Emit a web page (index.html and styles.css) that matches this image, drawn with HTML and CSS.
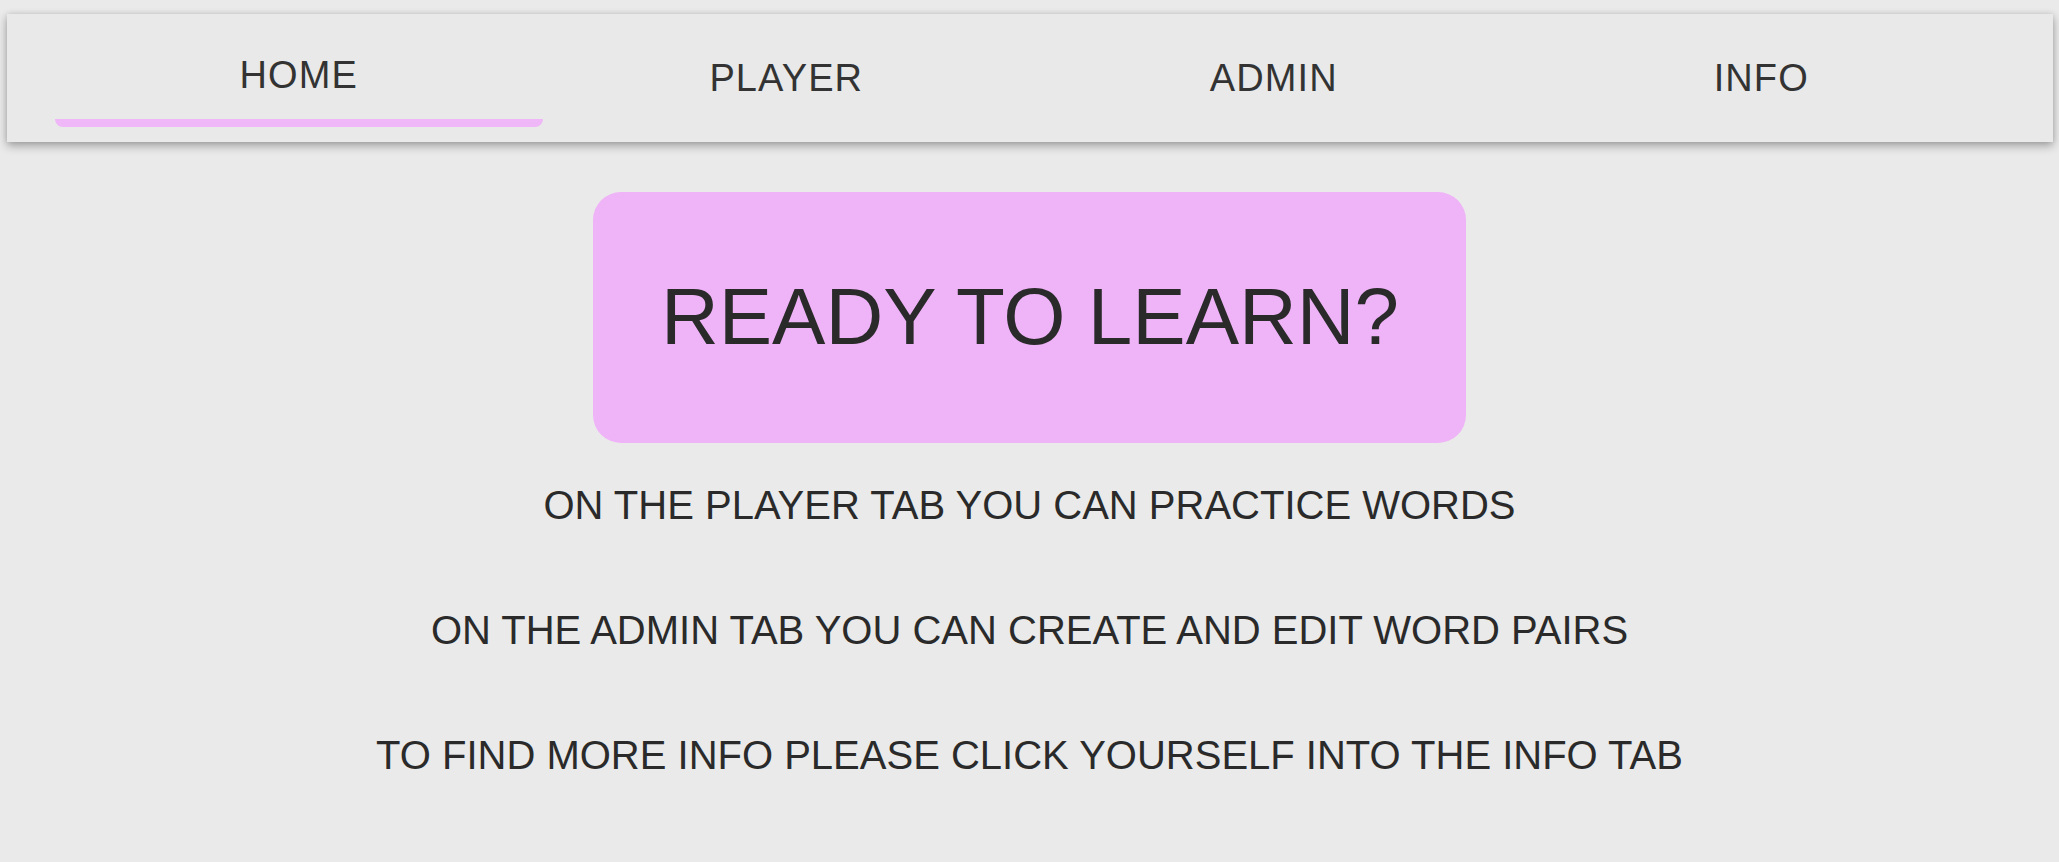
FILE: index.html
```html
<!DOCTYPE html>
<html lang="en">
<head>
<meta charset="utf-8">
<title>Ready to learn</title>
<link rel="stylesheet" href="styles.css">
</head>
<body>
  <nav class="tabs">
    <a class="tab tab-active" href="#">HOME<span class="indicator"></span></a>
    <a class="tab" href="#">PLAYER</a>
    <a class="tab" href="#">ADMIN</a>
    <a class="tab" href="#">INFO</a>
  </nav>
  <main class="home">
    <div class="hero">READY TO LEARN?</div>
    <div class="lines">
      <p class="line">ON THE PLAYER TAB YOU CAN PRACTICE WORDS</p>
      <p class="line">ON THE ADMIN TAB YOU CAN CREATE AND EDIT WORD PAIRS</p>
      <p class="line">TO FIND MORE INFO PLEASE CLICK YOURSELF INTO THE INFO TAB</p>
    </div>
  </main>
</body>
</html>
```

FILE: styles.css
```css
html, body {
  margin: 0;
  padding: 0;
}

body {
  background: #eaeaea;
  font-family: "Liberation Sans", Arial, sans-serif;
  color: #2b2b2b;
}

.tabs {
  display: flex;
  height: 128px;
  margin: 14px 6px 0 7px;
  padding: 0 48px 0 48px;
  background: #e9e9e9;
  box-shadow: 0 4px 9px rgba(0, 0, 0, 0.3), 0 0 6px rgba(0, 0, 0, 0.1);
}

.tab {
  position: relative;
  flex: 1 1 0;
  display: block;
  padding-top: 42px;
  text-align: center;
  font-size: 38px;
  line-height: 44px;
  letter-spacing: 1.1px;
  color: #333333;
  text-decoration: none;
}

.tab-active {
  padding-top: 39px;
}

.indicator {
  position: absolute;
  left: 0;
  right: 0;
  bottom: 15px;
  height: 8px;
  background: #efb7f7;
  border-radius: 0 0 8px 8px;
}

.home {
  display: flex;
  flex-direction: column;
  align-items: center;
  padding-top: 50px;
}

.hero {
  padding: 79px 67px 80px 68px;
  background: #efb3f7;
  border-radius: 28px;
  font-size: 80px;
  line-height: 92px;
  color: #2a2a2a;
  white-space: nowrap;
}

.lines {
  display: flex;
  flex-direction: column;
  align-items: center;
  gap: 79px;
  margin-top: 39px;
}

.line {
  margin: 0;
  font-size: 40px;
  line-height: 46px;
  color: #2a2a2a;
  white-space: nowrap;
}
```
